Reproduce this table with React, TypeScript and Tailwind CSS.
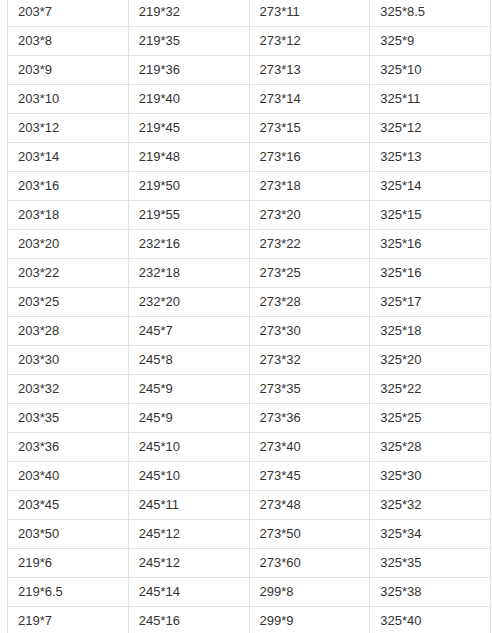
const c1 = ["203*7","203*8","203*9","203*10","203*12","203*14","203*16","203*18","203*20","203*22","203*25","203*28","203*30","203*32","203*35","203*36","203*40","203*45","203*50","219*6","219*6.5","219*7"];
const c2 = ["219*32","219*35","219*36","219*40","219*45","219*48","219*50","219*55","232*16","232*18","232*20","245*7","245*8","245*9","245*9","245*10","245*10","245*11","245*12","245*12","245*14","245*16"];
const c3 = ["273*11","273*12","273*13","273*14","273*15","273*16","273*18","273*20","273*22","273*25","273*28","273*30","273*32","273*35","273*36","273*40","273*45","273*48","273*50","273*60","299*8","299*9"];
const c4 = ["325*8.5","325*9","325*10","325*11","325*12","325*13","325*14","325*15","325*16","325*16","325*17","325*18","325*20","325*22","325*25","325*28","325*30","325*32","325*34","325*35","325*38","325*40"];

export default function App() {
  return (
    <div className="w-[492px] h-[633px] overflow-hidden bg-white" style={{ fontFamily: '"Liberation Sans", Arial, sans-serif' }}>
      <div className="ml-[7px] mt-[-3px] w-[484px] border-l border-[#e3e3e3]">
        {c1.map((_, i) => (
          <div key={i} className="grid grid-cols-4 h-[29px] border-t border-[#e3e3e3]">
            {[c1[i], c2[i], c3[i], c4[i]].map((t, j) => (
              <div key={j} className="flex items-center pl-[10px] border-r border-[#e3e3e3] text-[13px] text-[#333]">
                {t}
              </div>
            ))}
          </div>
        ))}
      </div>
    </div>
  );
}
